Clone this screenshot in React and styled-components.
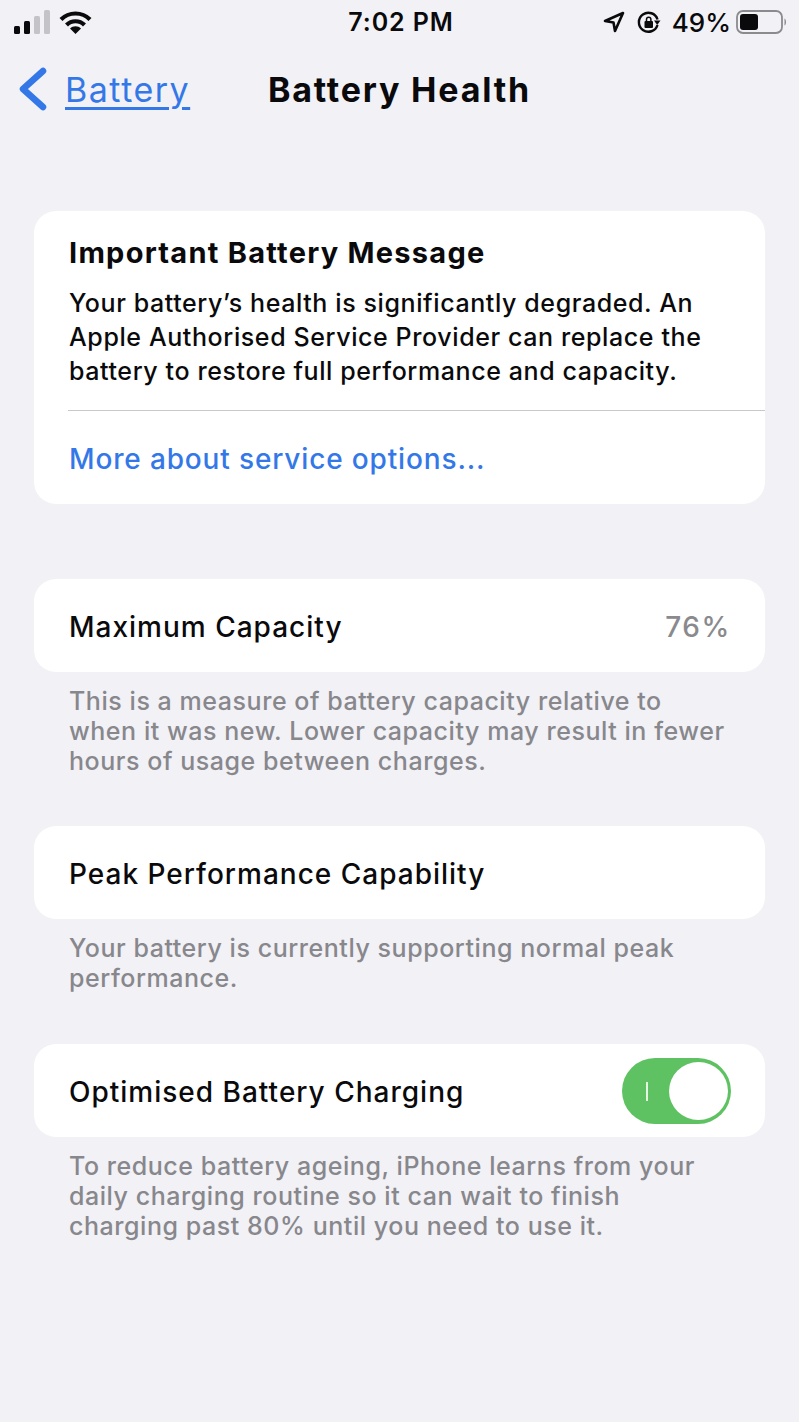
import React from 'react';
import styled, { createGlobalStyle } from 'styled-components';

const GlobalStyle = createGlobalStyle`
  html, body {
    margin: 0;
    padding: 0;
    background: #f1f1f6;
  }
  body {
    font-family: Inter, "Liberation Sans", sans-serif;
    color: #0a0a0c;
  }
`;

const Page = styled.div`
  width: 799px;
  height: 1422px;
  overflow: hidden;
  background: #f1f1f6;
`;

const StatusBar = styled.div`
  height: 44px;
  display: grid;
  grid-template-columns: 1fr auto 1fr;
  align-items: center;
  padding: 0 11px 0 14px;
`;

const StatusLeft = styled.div`
  display: flex;
  align-items: center;
  gap: 8px;
`;

const StatusRight = styled.div`
  display: flex;
  align-items: center;
  justify-content: flex-end;
  gap: 12px;
`;

const Clock = styled.div`
  font-size: 25px;
  font-weight: 600;
  letter-spacing: 0.9px;
`;

const Percent = styled.div`
  font-size: 26px;
  font-weight: 500;
  margin: 0 -7px 0 -1px;
`;

const NavBar = styled.div`
  position: relative;
  height: 90px;
  display: flex;
  align-items: center;
  padding: 0 0 0 19px;
`;

const BackLink = styled.div`
  display: flex;
  align-items: center;
  gap: 18px;
`;

const BackLabel = styled.span`
  font-size: 34px;
  letter-spacing: 1.5px;
  color: #3478e8;
  text-decoration: underline;
  text-underline-offset: 5px;
  text-decoration-thickness: 3px;
`;

const NavTitle = styled.div`
  position: absolute;
  left: 0;
  right: 0;
  text-align: center;
  font-size: 34px;
  font-weight: 700;
  letter-spacing: 1.8px;
`;

const Content = styled.div`
  padding: 77px 34px 0;
`;

const Card = styled.div`
  background: #fff;
  border-radius: 22px;
  margin-top: ${p => p.$top || 0}px;
  overflow: hidden;
`;

const MessageBody = styled.div`
  padding: 24px 0 22px 35px;
`;

const MessageTitle = styled.div`
  font-size: 29px;
  font-weight: 700;
  line-height: 36px;
  letter-spacing: 1.25px;
`;

const MessageText = styled.div`
  font-size: 25px;
  font-weight: 500;
  line-height: 34px;
  letter-spacing: 0.6px;
  margin-top: 15px;
`;

const Divider = styled.div`
  height: 1px;
  margin-left: 34px;
  background: #c8c8cc;
`;

const ServiceLink = styled.div`
  height: 93px;
  display: flex;
  align-items: center;
  padding: 2px 0 0 35px;
  box-sizing: border-box;
  font-size: 28px;
  font-weight: 500;
  letter-spacing: 0.85px;
  color: #3478e8;
`;

const Row = styled.div`
  height: 93px;
  display: flex;
  align-items: center;
  justify-content: space-between;
  padding: 0 34px 0 35px;
  font-size: 28px;
  font-weight: 500;
  letter-spacing: 1px;
`;

const RowLabel = styled.span`
  padding-top: 2px;
`;

const RowValue = styled.span`
  padding-top: 2px;
  letter-spacing: 1.6px;
  color: #8a8a8e;
`;

const Footer = styled.div`
  padding: 14px 35px 0;
  font-size: 25px;
  font-weight: 500;
  line-height: 30px;
  letter-spacing: 0.55px;
  color: #87878c;
`;

const Toggle = styled.div`
  width: 109px;
  height: 66px;
  border-radius: 33px;
  background: #5ec162;
  position: relative;
  flex: none;
`;

const ToggleMark = styled.span`
  position: absolute;
  left: 24px;
  top: 24px;
  width: 2px;
  height: 19px;
  background: #e4f5e4;
`;

const ToggleKnob = styled.span`
  position: absolute;
  right: 3px;
  top: 4px;
  width: 59px;
  height: 58px;
  border-radius: 50%;
  background: #fff;
`;

const Signal = () => (
  <svg width="37" height="24" viewBox="0 0 37 24">
    <rect x="0" y="16" width="6" height="8" rx="1.5" fill="#0a0a0c" />
    <rect x="10" y="11" width="6" height="13" rx="1.5" fill="#0a0a0c" />
    <rect x="20" y="6" width="6" height="18" rx="1.5" fill="#c4c4c8" />
    <rect x="30" y="0" width="6" height="24" rx="1.5" fill="#c4c4c8" />
  </svg>
);

const Wifi = () => (
  <svg width="33" height="25" viewBox="0 0 33 25" fill="none" stroke="#0a0a0c" strokeWidth="4.2">
    <path d="M2 9.5C10 1.5 23 1.5 31 9.5" />
    <path d="M7.5 15C12.5 10 20.5 10 25.5 15" />
    <path d="M11 18.5L16.5 24L22 18.5C19 15.6 14 15.6 11 18.5Z" fill="#0a0a0c" stroke="none" />
  </svg>
);

const Chevron = () => (
  <svg width="28" height="44" viewBox="0 0 28 44" fill="none" stroke="#3478e8" strokeWidth="6.5" strokeLinecap="round" strokeLinejoin="round">
    <path d="M24 4L4 22L24 40" />
  </svg>
);

const LocationArrow = () => (
  <svg width="22" height="22" viewBox="0 0 22 22" fill="none" stroke="#0a0a0c" strokeWidth="2.6" strokeLinejoin="round">
    <path d="M2 10L20 2L12 20L10.5 11.5Z" />
  </svg>
);

const RotationLock = () => (
  <svg width="24" height="24" viewBox="0 0 24 24" fill="none">
    <path d="M20.5 9.5A9.5 9.5 0 1 0 20.5 15" stroke="#0a0a0c" strokeWidth="2.4" />
    <path d="M17 10.5L23.5 10.5L20.2 15Z" fill="#0a0a0c" />
    <rect x="7.5" y="11" width="8.5" height="7" rx="1" fill="#0a0a0c" />
    <path d="M9.5 11V9.5a2.2 2.2 0 0 1 4.4 0V11" stroke="#0a0a0c" strokeWidth="1.5" />
  </svg>
);

const BatteryIcon = () => (
  <svg width="52" height="24" viewBox="0 0 52 24">
    <rect x="1" y="1" width="45" height="22" rx="6" fill="none" stroke="#8b8b8e" strokeWidth="1.8" />
    <rect x="4" y="4" width="18" height="16" rx="3" fill="#0a0a0c" />
    <path d="M48.5 8.5C50.5 9.5 50.5 14.5 48.5 15.5Z" fill="#8b8b8e" />
  </svg>
);

export default function App() {
  return (
    <Page>
      <GlobalStyle />
      <StatusBar>
        <StatusLeft>
          <Signal />
          <Wifi />
        </StatusLeft>
        <Clock>7:02 PM</Clock>
        <StatusRight>
          <LocationArrow />
          <RotationLock />
          <Percent>49%</Percent>
          <BatteryIcon />
        </StatusRight>
      </StatusBar>
      <NavBar>
        <NavTitle>Battery Health</NavTitle>
        <BackLink>
          <Chevron />
          <BackLabel>Battery</BackLabel>
        </BackLink>
      </NavBar>
      <Content>
        <Card>
          <MessageBody>
            <MessageTitle>Important Battery Message</MessageTitle>
            <MessageText>
              Your battery’s health is significantly degraded. An<br />
              Apple Authorised Service Provider can replace the<br />
              battery to restore full performance and capacity.
            </MessageText>
          </MessageBody>
          <Divider />
          <ServiceLink>More about service options...</ServiceLink>
        </Card>

        <Card $top={75}>
          <Row>
            <RowLabel>Maximum Capacity</RowLabel>
            <RowValue>76%</RowValue>
          </Row>
        </Card>
        <Footer>
          This is a measure of battery capacity relative to<br />
          when it was new. Lower capacity may result in fewer<br />
          hours of usage between charges.
        </Footer>

        <Card $top={50}>
          <Row>
            <RowLabel>Peak Performance Capability</RowLabel>
          </Row>
        </Card>
        <Footer>
          Your battery is currently supporting normal peak<br />
          performance.
        </Footer>

        <Card $top={51}>
          <Row>
            <RowLabel>Optimised Battery Charging</RowLabel>
            <Toggle>
              <ToggleMark />
              <ToggleKnob />
            </Toggle>
          </Row>
        </Card>
        <Footer>
          To reduce battery ageing, iPhone learns from your<br />
          daily charging routine so it can wait to finish<br />
          charging past 80% until you need to use it.
        </Footer>
      </Content>
    </Page>
  );
}
